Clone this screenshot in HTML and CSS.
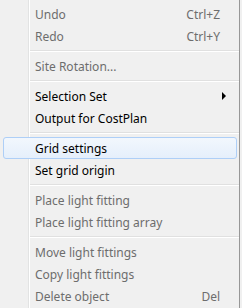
FILE: index.html
```
<!DOCTYPE html>
<html lang="en">
<head>
    <meta charset="UTF-8">
    <title>Context Menu</title>
    <link rel="stylesheet" href="styles.css">
</head>
<body>

<div class="menu">
    <div class="item disabled"><span class="label">Undo</span><span class="key">Ctrl+Z</span></div>
    <div class="item disabled"><span class="label">Redo</span><span class="key">Ctrl+Y</span></div>
    <div class="sep"></div>
    <div class="item disabled"><span class="label">Site Rotation...</span></div>
    <div class="sep"></div>
    <div class="item"><span class="label">Selection Set</span><span class="arrow"></span></div>
    <div class="item"><span class="label">Output for CostPlan</span></div>
    <div class="sep"></div>
    <div class="item hover"><span class="label">Grid settings</span></div>
    <div class="item"><span class="label">Set grid origin</span></div>
    <div class="sep"></div>
    <div class="item disabled"><span class="label">Place light fitting</span></div>
    <div class="item disabled"><span class="label">Place light fitting array</span></div>
    <div class="sep"></div>
    <div class="item disabled"><span class="label">Move light fittings</span></div>
    <div class="item disabled"><span class="label">Copy light fittings</span></div>
    <div class="item disabled"><span class="label">Delete object</span><span class="key">Del</span></div>
</div>

</body>
</html>
```
FILE: styles.css
```
body {
    margin: 0;
    background: #f0f0f0;
    font-family: "Noto Sans", "Open Sans", sans-serif;
    font-size: 12px;
}
.menu {
    position: relative;
    width: 240px;
    height: 308px;
    box-sizing: border-box;
    padding-top: 3px;
    background: #f0f0f0;
    border-right: 1px solid #979797;
}
.menu::before {
    content: "";
    position: absolute;
    top: 0;
    bottom: 0;
    left: 28px;
    width: 1px;
    background: #e2e3e3;
    border-right: 1px solid #ffffff;
}
.item {
    position: relative;
    display: flex;
    align-items: center;
    height: 22px;
    margin: 0 2px 0 3px;
    padding: 0 16px 0 31px;
    box-sizing: border-box;
    border: 1px solid transparent;
    border-radius: 3px;
    color: #000;
}
.item .label {
    flex: 1;
}
.item .key {
    text-align: right;
}
.item.disabled {
    color: #6d6d6d;
}
.item.hover {
    border-color: #aecff7;
    background: linear-gradient(#f2f7fd, #e5effb);
    z-index: 1;
}
.arrow {
    width: 0;
    height: 0;
    margin-right: -6px;
    border-top: 4px solid transparent;
    border-bottom: 4px solid transparent;
    border-left: 4px solid #000;
}
.sep {
    height: 8px;
    margin-left: 30px;
    display: flex;
    align-items: center;
}
.sep::before {
    content: "";
    flex: 1;
    height: 1px;
    background: #e0e0e0;
    border-bottom: 1px solid #ffffff;
}
```
